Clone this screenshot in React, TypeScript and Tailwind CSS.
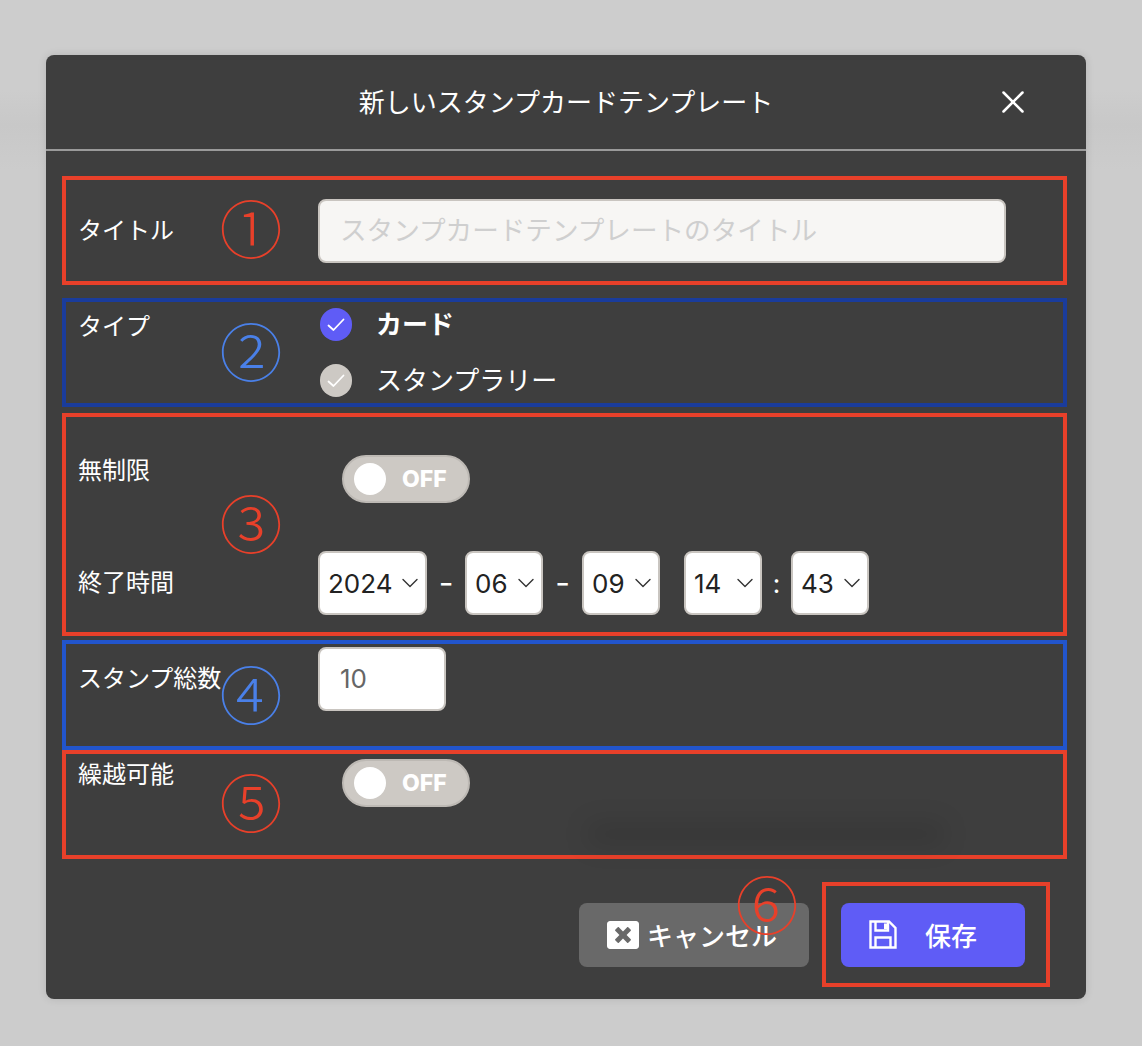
import React from "react";
import { X } from "lucide-react";
import { FaWindowClose } from "react-icons/fa";

interface MarkProps {
	glyph: string;
	color: string;
	className: string;
}

const Mark: React.FC<MarkProps> = (props) => {
	return (
		<span className={`absolute flex h-[58px] w-[58px] items-center justify-center text-[63px] leading-none font-light font-['Noto_Sans_CJK_JP',sans-serif] ${props.color} ${props.className}`}>
			{props.glyph}
		</span>
	);
};

const Radio: React.FC<{ checked?: boolean; label: string }> = (props) => {
	return (
		<div className="flex h-[33px] items-center">
			<span className={`ml-[2px] flex h-[33px] w-[32px] items-center justify-center rounded-full ${props.checked ? "bg-[#5f5cf6]" : "bg-[#cdc9c4]"}`}>
				<svg width="18" height="14" viewBox="0 0 18 14" fill="none" stroke="white" strokeWidth="1.8" strokeLinecap="round" strokeLinejoin="round">
					<path d="M1.5 7.5 6.5 12 16.5 1.5" />
				</svg>
			</span>
			<span className={`ml-[24px] text-[26px] leading-[33px] text-white ${props.checked ? "font-bold" : ""}`}>{props.label}</span>
		</div>
	);
};

const Toggle: React.FC = () => {
	return (
		<div className="flex h-[48px] w-[128px] items-center rounded-full border-2 border-[#bdb9b4] bg-[#cdc9c4] pl-[10px]">
			<span className="h-[32px] w-[32px] rounded-full bg-white" />
			<span className="ml-[16px] text-[23px] leading-none font-extrabold text-white">OFF</span>
		</div>
	);
};

const Select: React.FC<{ value: string; width: string }> = (props) => {
	return (
		<div className={`flex h-[64px] items-center justify-between rounded-[8px] border-2 border-[#c9c5c0] bg-white pl-[8px] pr-[7px] text-[26px] text-[#222222] ${props.width}`}>
			<span>{props.value}</span>
			<svg width="16" height="10" viewBox="0 0 16 10" fill="none" stroke="#333333" strokeWidth="1.4" strokeLinecap="round" strokeLinejoin="round">
				<path d="M1 1.5 8 8.5 15 1.5" />
			</svg>
		</div>
	);
};

const Dash: React.FC<{ width: string }> = (props) => {
	return <span className={`text-center text-[32px] font-normal leading-none text-white ${props.width}`}>-</span>;
};

const SaveIcon: React.FC = () => {
	return (
		<svg width="28" height="29" viewBox="0 0 28 29" fill="none" stroke="white" strokeWidth="2.4" strokeLinejoin="miter" className="shrink-0">
			<path d="M1.5 1.5H20L26.5 8V27.5H1.5Z" />
			<path d="M6.5 1.5V10.5H19V1.5" />
			<path d="M6.5 27.5V17.5H21.5V27.5" />
			<path d="M15 3.5H18V9H15Z" fill="white" stroke="none" />
		</svg>
	);
};

export default function App() {
	return (
		<div className="h-[1046px] w-[1142px] overflow-hidden bg-[linear-gradient(to_bottom,#cdcdcd_0,#cdcdcd_90px,#c8c8c8_125px,#cccccc_170px,#cccccc_100%)] pl-[46px] pt-[55px] font-['Inter','Noto_Sans_CJK_JP',sans-serif]">
			<div className="relative h-[944px] w-[1040px] overflow-hidden rounded-[8px] bg-[#3e3e3e] shadow-[0_0_8px_rgba(0,0,0,0.12)]">
				<div className="relative flex h-[96px] items-center justify-center border-b-2 border-[#9a9a9a]">
					<h1 className="text-[26px] font-normal text-white">新しいスタンプカードテンプレート</h1>
					<X className="absolute left-[948px] top-[28px] text-white" size={38} strokeWidth={1.6} />
				</div>

				<div className="ml-[16px] w-[1005px]">
					<section className="relative mt-[25px] flex h-[109px] items-center border-4 border-[#e8402a] pl-[12px]">
						<label className="w-[240px] text-[24px] leading-[36px] text-white">タイトル</label>
						<div className="flex h-[64px] w-[688px] items-center rounded-[8px] border-2 border-[#c9c5c0] bg-[#f7f6f4] pl-[20px] text-[26.6px] text-[#cfcfcf]">
							スタンプカードテンプレートのタイトル
						</div>
						<Mark glyph="①" color="text-[#e8402a]" className="left-[156px] top-[16px]" />
					</section>

					<section className="relative mt-[13px] flex h-[109px] border-4 border-[#1a3c9c] pl-[12px]">
						<label className="w-[240px] pt-[7px] text-[24px] leading-[36px] text-white">タイプ</label>
						<div className="flex flex-col gap-[23px] pt-[6px]">
							<Radio checked label="カード" />
							<Radio label="スタンプラリー" />
						</div>
						<Mark glyph="②" color="text-[#4a80e8]" className="left-[156px] top-[17px]" />
					</section>

					<section className="relative mt-[6px] h-[223px] border-4 border-[#e8402a] pl-[12px]">
						<div className="flex pt-[36px]">
							<label className="w-[240px] text-[24px] leading-[36px] text-white">無制限</label>
							<div className="ml-[24px] pt-[2px]">
								<Toggle />
							</div>
						</div>
						<div className="mt-[48px] flex items-center">
							<label className="w-[240px] text-[24px] leading-[36px] text-white">終了時間</label>
							<Select value="2024" width="w-[109px]" />
							<Dash width="w-[38px]" />
							<Select value="06" width="w-[78px]" />
							<Dash width="w-[39px]" />
							<Select value="09" width="w-[78px]" />
							<div className="w-[24px]" />
							<Select value="14" width="w-[78px]" />
							<span className="w-[29px] text-center text-[26px] text-white">:</span>
							<Select value="43" width="w-[78px]" />
						</div>
						<Mark glyph="③" color="text-[#e8402a]" className="left-[156px] top-[74px]" />
					</section>

					<section className="relative mt-[4px] flex h-[110px] border-4 border-[#2255cc] pl-[12px]">
						<label className="w-[240px] pt-[17px] text-[24px] leading-[36px] text-white">スタンプ総数</label>
						<div className="mt-[3px] flex h-[64px] w-[128px] items-center rounded-[8px] border-2 border-[#c9c5c0] bg-white pb-[2px] pl-[20px] text-[26px] text-[#666666]">10</div>
						<Mark glyph="④" color="text-[#4a80e8]" className="left-[156px] top-[18px]" />
					</section>

					<section className="relative flex h-[109px] border-4 border-[#e8402a] pl-[12px]">
						<label className="w-[240px] pt-[3px] text-[24px] leading-[36px] text-white">繰越可能</label>
						<div className="ml-[24px] pt-[5px]">
							<Toggle />
						</div>
						<Mark glyph="⑤" color="text-[#e8402a]" className="left-[156px] top-[16px]" />
						<div className="absolute left-[520px] top-[68px] h-[24px] w-[360px] rounded-full bg-black/10 blur-[12px]" />
					</section>
				</div>

				<div className="relative mr-[36px] mt-[23px] flex items-center justify-end gap-[13px]">
					<button className="flex h-[64px] w-[230px] items-center rounded-[8px] bg-[#696969] pl-[28px] text-[26px] font-medium text-white">
						<FaWindowClose size={32} className="shrink-0" />
						<span className="ml-[8px] pt-[3px]">キャンセル</span>
					</button>
					<div className="flex h-[105px] w-[228px] items-center border-4 border-[#e8402a] pl-[15px]">
						<button className="flex h-[64px] w-[184px] items-center rounded-[8px] bg-[#5f5cf6] pl-[28px] text-[26px] font-medium text-white">
							<SaveIcon />
							<span className="ml-[28px] pt-[3px]">保存</span>
						</button>
					</div>
					<Mark glyph="⑥" color="text-[#e8402a]" className="left-[692px] top-[-10px]" />
				</div>
			</div>
		</div>
	);
}
